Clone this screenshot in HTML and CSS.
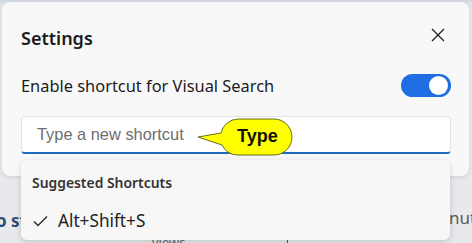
FILE: index.html
```html
<!DOCTYPE html>
<html>
<head>
<meta charset="utf-8">
<link rel="stylesheet" href="styles.css">
</head>
<body>
<div class="page">
  <div class="backdrop">
    <span class="bg-text bg-left">o st</span>
    <span class="bg-text bg-right">nut</span>
    <span class="bg-text bg-views">views</span>
    <span class="bg-bar"></span>
  </div>
  <div class="dialog">
    <div class="header">
      <h1 class="title">Settings</h1>
      <button class="close" aria-label="Close">
        <svg width="14" height="14" viewBox="0 0 14 14"><path d="M1 1L13 13M13 1L1 13" stroke="#1f1f1f" stroke-width="1.3" fill="none"/></svg>
      </button>
    </div>
    <div class="row">
      <span class="label">Enable shortcut for Visual Search</span>
      <span class="toggle"><span class="knob"></span></span>
    </div>
    <div class="field">
      <span class="placeholder">Type a new shortcut</span>
    </div>
  </div>
  <div class="callout">
    <svg class="callout-shape" width="100" height="42" viewBox="0 0 100 42">
      <path d="M42 2 H78 A18 18 0 0 1 78 38 H42 A18 18 0 0 1 26 28 L2 20 L25 16 A18 18 0 0 1 42 2 Z" fill="#ffff00" stroke="#6b6b20" stroke-width="1"/>
    </svg>
    <span class="callout-text">Type</span>
  </div>
  <div class="dropdown">
    <div class="dd-head">Suggested Shortcuts</div>
    <div class="dd-item">
      <svg class="check" width="15" height="12" viewBox="0 0 15 12"><path d="M1 6.5L5 10.5L14 1.5" stroke="#2b2b2b" stroke-width="1.4" fill="none"/></svg>
      <span>Alt+Shift+S</span>
    </div>
  </div>
</div>
</body>
</html>
```

FILE: styles.css
```css
* { box-sizing: border-box; }
html, body { margin: 0; padding: 0; }
body {
  width: 472px;
  height: 243px;
  overflow: hidden;
  background: #e7e9ec;
  font-family: "Noto Sans", "Open Sans", sans-serif;
}
.page {
  position: relative;
  width: 472px;
  height: 243px;
  background: linear-gradient(#cfd6e0 0, #dfe3e9 3px, #e7e9ec 8px);
}
.backdrop {
  position: absolute;
  inset: 0;
}
.bg-text {
  position: absolute;
  font-size: 17px;
  color: #555;
}
.bg-left {
  left: -4px;
  top: 209px;
  font-weight: 700;
  color: #2f4a6e;
}
.bg-right {
  left: 449px;
  top: 206px;
  color: #5a5a5a;
}
.bg-views {
  left: 152px;
  top: 233px;
  font-size: 13px;
  color: #666;
}
.bg-bar {
  position: absolute;
  left: 287px;
  top: 238px;
  width: 1px;
  height: 6px;
  background: #555;
}
.dialog {
  position: absolute;
  left: 2px;
  top: 2px;
  width: 467px;
  height: 174px;
  background: #f8f8f9;
  border-radius: 8px;
  box-shadow: 0 1px 4px rgba(0,0,0,0.12);
  padding: 18px 19px 0 19px;
  display: flex;
  flex-direction: column;
}
.header {
  display: flex;
  align-items: center;
  justify-content: space-between;
  height: 34px;
}
.title {
  margin: 0;
  margin-top: 2px;
  font-size: 18px;
  font-weight: 600;
  color: #1b1b1b;
}
.close {
  border: 0;
  background: none;
  padding: 0;
  margin-right: 5px;
  margin-top: -4px;
  width: 14px;
  height: 14px;
  display: flex;
}
.row {
  display: flex;
  align-items: center;
  justify-content: space-between;
  margin-top: 19px;
  height: 24px;
}
.label {
  font-size: 16.4px;
  color: #1b1b1b;
}
.toggle {
  width: 50px;
  height: 23px;
  border-radius: 12px;
  background: #1f6ee3;
  margin-right: -1px;
  display: flex;
  align-items: center;
  justify-content: flex-end;
  padding-right: 3px;
}
.knob {
  width: 19px;
  height: 19px;
  border-radius: 50%;
  background: #fff;
}
.field {
  margin-top: 19px;
  width: 430px;
  height: 38px;
  background: #fff;
  border: 1px solid #e3e3e3;
  border-bottom: 2px solid #1f6bbf;
  border-radius: 4px;
  display: flex;
  align-items: center;
  padding-left: 15px;
}
.placeholder {
  font-family: "Liberation Sans", Arial, sans-serif;
  font-size: 16.4px;
  color: #6e6e6e;
}
.callout {
  position: absolute;
  left: 196px;
  top: 117px;
  width: 100px;
  height: 42px;
}
.callout-shape {
  position: absolute;
  left: 0;
  top: 0;
}
.callout-text {
  position: absolute;
  left: 41px;
  top: 9px;
  font-family: "Liberation Sans", Arial, sans-serif;
  font-weight: 700;
  font-size: 18px;
  color: #111;
}
.dropdown {
  position: absolute;
  left: 21px;
  top: 160px;
  width: 429px;
  height: 80px;
  background: #f7f7f7;
  border-radius: 6px;
  box-shadow: 0 2px 6px rgba(0,0,0,0.16);
  padding: 13px 0 0 11px;
}
.dd-head {
  font-size: 13.9px;
  font-weight: 600;
  color: #333;
}
.dd-item {
  display: flex;
  align-items: center;
  margin-top: 17px;
  font-size: 17.2px;
  color: #222;
}
.check {
  margin: 0 10px 0 1px;
}
```
